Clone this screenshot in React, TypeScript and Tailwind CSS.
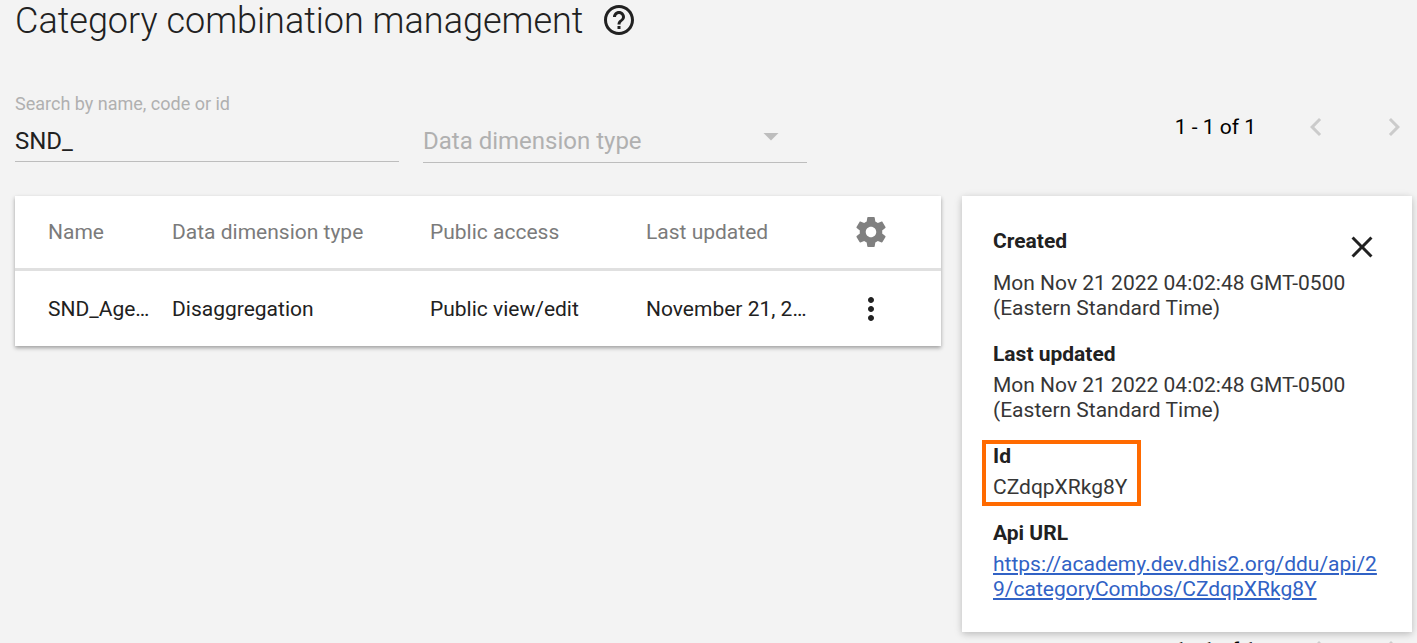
import type { ReactNode } from 'react';
import {
  MdArrowDropDown,
  MdChevronLeft,
  MdChevronRight,
  MdClose,
  MdHelpOutline,
  MdMoreVert,
} from 'react-icons/md';

const combos = [
  {
    name: 'SND_Age…',
    dimension: 'Disaggregation',
    access: 'Public view/edit',
    updated: 'November 21, 2…',
  },
];

function GearIcon() {
  return (
    <svg viewBox="0 0 24 24" className="size-9" fill="currentColor" aria-hidden="true">
      <path d="M19.43 12.98c.04-.32.07-.64.07-.98s-.03-.66-.07-.98l2.11-1.65c.19-.15.24-.42.12-.64l-2-3.46c-.12-.22-.39-.3-.61-.22l-2.49 1c-.52-.4-1.08-.73-1.69-.98l-.38-2.65C14.46 2.18 14.25 2 14 2h-4c-.25 0-.46.18-.49.42l-.38 2.65c-.61.25-1.17.59-1.69.98l-2.49-1c-.23-.09-.49 0-.61.22l-2 3.46c-.13.22-.07.49.12.64l2.11 1.65c-.04.32-.07.65-.07.98s.03.66.07.98l-2.11 1.65c-.19.15-.24.42-.12.64l2 3.46c.12.22.39.3.61.22l2.49-1c.52.4 1.08.73 1.69.98l.38 2.65c.03.24.24.42.49.42h4c.25 0 .46-.18.49-.42l.38-2.65c.61-.25 1.17-.59 1.69-.98l2.49 1c.23.09.49 0 .61-.22l2-3.46c.12-.22.07-.49-.12-.64l-2.11-1.65zM12 15.5c-1.93 0-3.5-1.57-3.5-3.5s1.57-3.5 3.5-3.5 3.5 1.57 3.5 3.5-1.57 3.5-3.5 3.5z" />
    </svg>
  );
}

function Pagination() {
  return (
    <nav aria-label="Pagination" className="flex h-9 items-center gap-[42px] text-[21px] leading-9 text-black">
      <span>1 - 1 of 1</span>
      <button type="button" disabled aria-label="Previous page" className="text-[#cbcbcb]">
        <MdChevronLeft className="size-9" />
      </button>
      <button type="button" disabled aria-label="Next page" className="text-[#cbcbcb]">
        <MdChevronRight className="size-9" />
      </button>
    </nav>
  );
}

function Detail({ label, children, action }: { label: string; children: ReactNode; action?: ReactNode }) {
  return (
    <div>
      <dt className="mb-1.5 flex items-start justify-between font-bold text-[#212121]">
        {label}
        {action}
      </dt>
      <dd className="break-words text-[#363636]">{children}</dd>
    </div>
  );
}

export default function App() {
  return (
    <div className="h-screen overflow-hidden bg-[#f3f3f3] pr-[5px] pl-[15px] font-['Roboto',sans-serif] text-[#212121]">
      <header className="flex h-10 items-start gap-[18px]">
        <h1 className="text-4xl leading-[42px] font-light">Category combination management</h1>
        <button type="button" aria-label="Help" className="self-center">
          <MdHelpOutline className="size-9" />
        </button>
      </header>

      <div className="mt-[52px] flex h-[71px] items-start gap-6">
        <div className="flex w-96 flex-col">
          <label htmlFor="search" className="text-lg leading-6 text-[#b0b0b0]">
            Search by name, code or id
          </label>
          <input
            id="search"
            type="text"
            defaultValue="SND_"
            className="mt-1 h-[42px] w-full border-b border-[#bdbdbd] bg-transparent text-2xl outline-none"
          />
        </div>
        <div className="relative w-96 self-end">
          <select
            aria-label="Data dimension type"
            className="block h-[43px] w-full appearance-none border-b border-[#bdbdbd] bg-transparent text-2xl text-[#b0b0b0] outline-none"
          >
            <option>Data dimension type</option>
          </select>
          <MdArrowDropDown className="pointer-events-none absolute -top-0.5 right-[18px] size-9 text-[#bdbdbd]" />
        </div>
        <div className="ml-auto pt-[17px]">
          <Pagination />
        </div>
      </div>

      <main className="mt-[33px] flex items-start gap-[21px]">
        <div className="min-w-0 flex-1 bg-white shadow-[0_2px_4px_rgba(0,0,0,0.35)]">
          <table className="w-full table-fixed border-separate border-spacing-0 text-left text-[21px] leading-7">
            <thead>
              <tr className="h-[75px] text-[#7b7b7b] *:border-b-3 *:border-[#e0e0e0] *:font-normal">
                <th className="w-[157px] pl-[33px]">Name</th>
                <th className="w-[258px]">Data dimension type</th>
                <th className="w-[216px]">Public access</th>
                <th className="w-[173px]">Last updated</th>
                <th className="w-[122px] pl-[34px]">
                  <button type="button" aria-label="Column settings" className="block text-[#808080]">
                    <GearIcon />
                  </button>
                </th>
              </tr>
            </thead>
            <tbody>
              {combos.map((combo) => (
                <tr key={combo.name} className="h-[75px]">
                  <td className="truncate pl-[33px]">{combo.name}</td>
                  <td>{combo.dimension}</td>
                  <td>{combo.access}</td>
                  <td className="truncate">{combo.updated}</td>
                  <td className="pl-[34px]">
                    <button type="button" aria-label="Row actions" className="block">
                      <MdMoreVert className="size-9" />
                    </button>
                  </td>
                </tr>
              ))}
            </tbody>
          </table>
        </div>

        <div className="w-[450px] shrink-0">
          <aside className="bg-white pt-[33px] pr-8 pb-[30px] pl-[31px] shadow-[0_2px_9px_rgba(0,0,0,0.12),0_2px_6px_rgba(0,0,0,0.12)]">
            <dl className="flex flex-col gap-[21px] text-[21px] leading-[25px]">
              <Detail
                label="Created"
                action={
                  <button type="button" aria-label="Close">
                    <MdClose className="size-9" />
                  </button>
                }
              >
                Mon Nov 21 2022 04:02:48 GMT-0500 (Eastern Standard Time)
              </Detail>
              <Detail label="Last updated">Mon Nov 21 2022 04:02:48 GMT-0500 (Eastern Standard Time)</Detail>
              <div className="relative">
                <Detail label="Id">CZdqpXRkg8Y</Detail>
                <div className="pointer-events-none absolute -top-1 -left-[11px] h-[66px] w-[159px] border-4 border-[#ff6a00]" />
              </div>
              <Detail label="Api URL">
                <a
                  href="https://academy.dev.dhis2.org/ddu/api/29/categoryCombos/CZdqpXRkg8Y"
                  className="break-all text-[#3162c5] underline"
                >
                  https://academy.dev.dhis2.org/ddu/api/29/categoryCombos/CZdqpXRkg8Y
                </a>
              </Detail>
            </dl>
          </aside>
          <div className="flex justify-end">
            <Pagination />
          </div>
        </div>
      </main>
    </div>
  );
}
